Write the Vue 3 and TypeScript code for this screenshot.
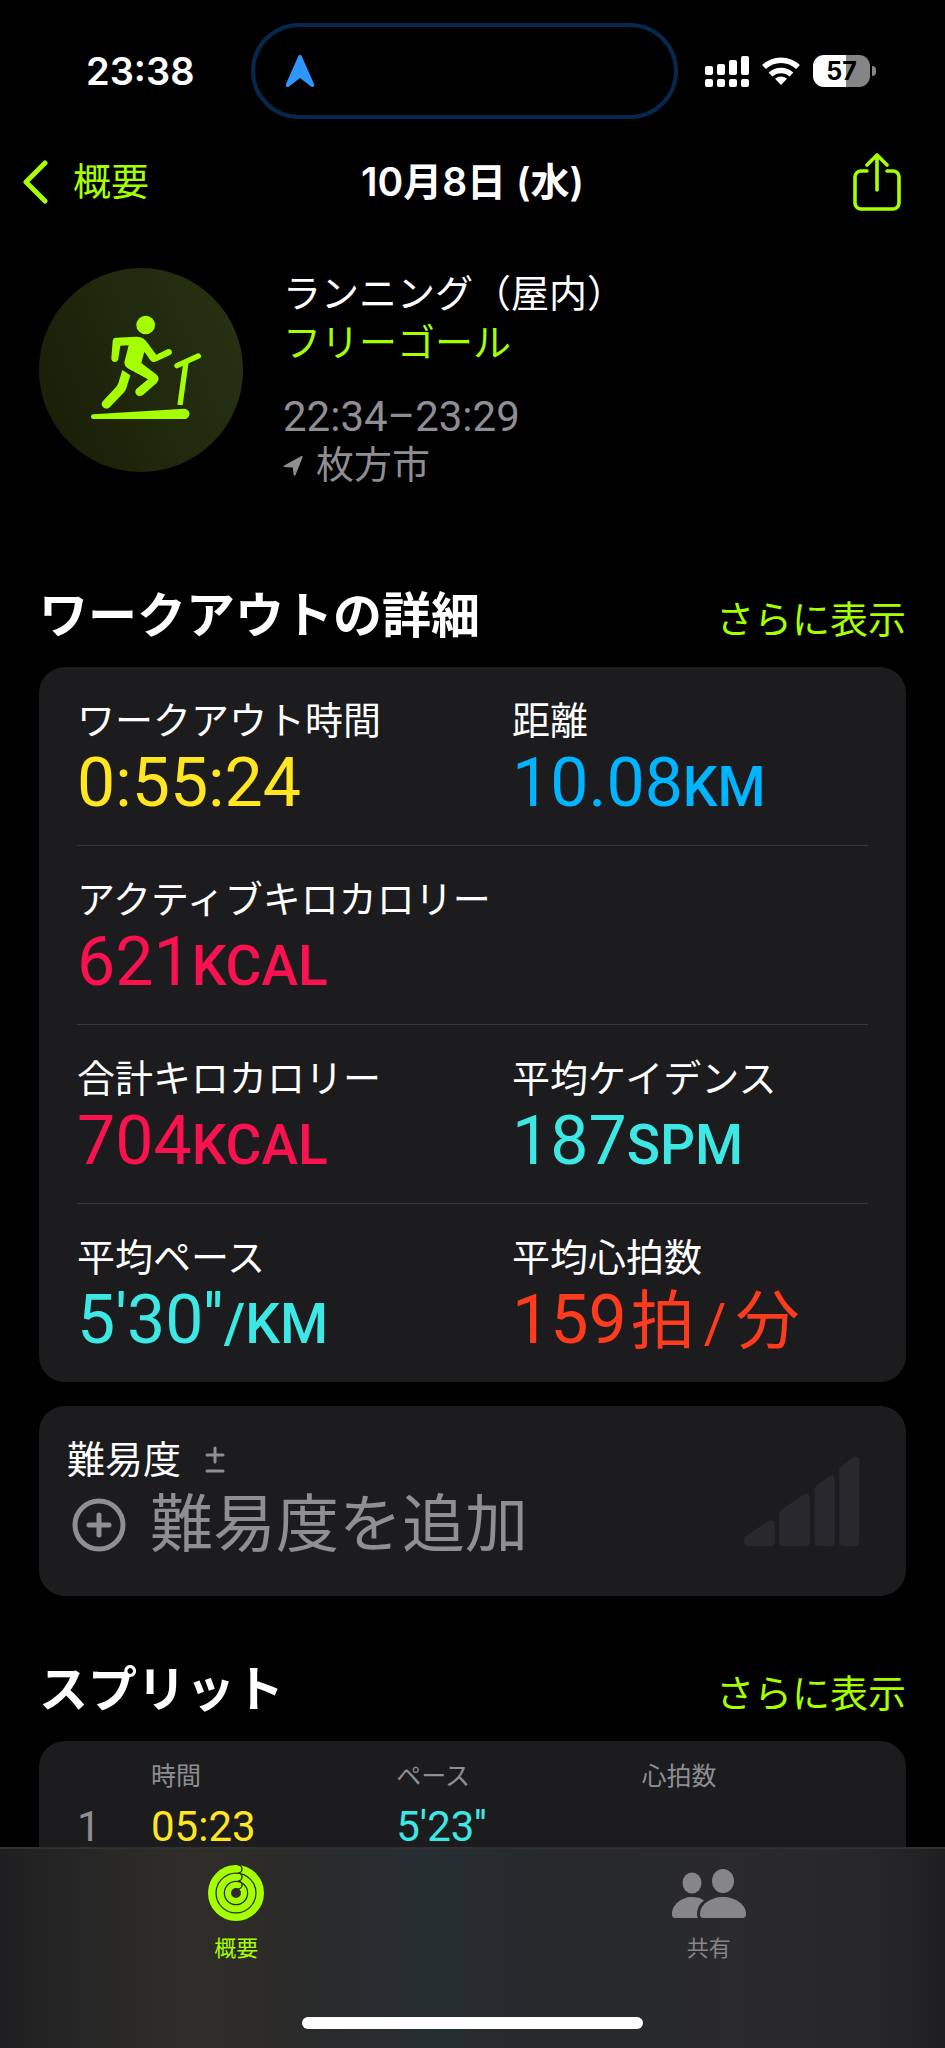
<script setup lang="ts">
interface Metric {
  label: string
  value: string
  unit?: string
  rate?: [string, string]
  tone: string
}

interface Split {
  index: number
  time: string
  pace: string
  heartRate: string
}

const metricRows: Metric[][] = [
  [
    { label: 'ワークアウト時間', value: '0:55:24', tone: 'yellow' },
    { label: '距離', value: '10.08', unit: 'KM', tone: 'blue' },
  ],
  [{ label: 'アクティブキロカロリー', value: '621', unit: 'KCAL', tone: 'pink' }],
  [
    { label: '合計キロカロリー', value: '704', unit: 'KCAL', tone: 'pink' },
    { label: '平均ケイデンス', value: '187', unit: 'SPM', tone: 'cyan' },
  ],
  [
    { label: '平均ペース', value: "5'30''", unit: '/KM', tone: 'cyan' },
    { label: '平均心拍数', value: '159', rate: ['拍', '分'], tone: 'red' },
  ],
]

const splits: Split[] = [{ index: 1, time: '05:23', pace: "5'23''", heartRate: '' }]
</script>

<template>
  <div class="screen">
    <div class="status">
      <time class="clock">23:38</time>
      <div class="island">
        <svg class="island-arrow" viewBox="0 0 30 34" aria-hidden="true">
          <path d="M15 1c1 0 1.600.6 2 1.800L29 30c.8 2.600-1 3.800-3 2.400L15 24 4 32.400C2 33.800.2 32.600 1 30L13 2.800C13.400 1.600 14 1 15 1z" fill="#2f96ff" />
        </svg>
      </div>
      <div class="indicators">
        <svg class="signal" viewBox="0 0 44 32" fill="#fff" aria-hidden="true">
          <rect x="0" y="11" width="8" height="9" rx="2" />
          <rect x="12" y="9" width="8" height="11" rx="2" />
          <rect x="24" y="5" width="8" height="15" rx="2" />
          <rect x="36" y="1" width="8" height="19" rx="2" />
          <rect x="0" y="24" width="8" height="8" rx="2" />
          <rect x="12" y="24" width="8" height="8" rx="2" />
          <rect x="24" y="24" width="8" height="8" rx="2" />
          <rect x="36" y="24" width="8" height="8" rx="2" />
        </svg>
        <svg class="wifi" viewBox="0 0 38 28" aria-hidden="true">
          <g fill="none" stroke="#fff" stroke-width="5.500">
            <path d="M2 10a24.500 24.500 0 0 1 34 0" />
            <path d="M8.500 17.500a15.500 15.500 0 0 1 21 0" />
          </g>
          <path d="M19 28l-6-6.200a9 9 0 0 1 12 0z" fill="#fff" />
        </svg>
        <span class="battery">57</span>
      </div>
    </div>

    <header class="nav">
      <button class="back" type="button">
        <svg viewBox="0 0 26 44" aria-hidden="true">
          <path d="M23 3L4 22l19 19" fill="none" stroke="currentColor" stroke-width="5" stroke-linecap="round" stroke-linejoin="round" />
        </svg>
        <span>概要</span>
      </button>
      <h1>10月8日 (水)</h1>
      <button class="share" type="button" aria-label="共有">
        <svg viewBox="0 0 48 58" fill="none" stroke="currentColor" stroke-width="3.600" stroke-linecap="round" stroke-linejoin="round" aria-hidden="true">
          <path d="M14 18H8a6 6 0 0 0-6 6v26a6 6 0 0 0 6 6h32a6 6 0 0 0 6-6V24a6 6 0 0 0-6-6h-6" />
          <path d="M24 37V3M14 12L24 2l10 10" />
        </svg>
      </button>
    </header>

    <main>
      <section class="hero">
        <svg class="badge" viewBox="-123 -96 612 612" aria-hidden="true">
          <defs>
            <linearGradient id="badge-fill" x1="0" y1="0.7" x2="1" y2="0.3">
              <stop offset="0" stop-color="#1a1f07" />
              <stop offset="1" stop-color="#263113" />
            </linearGradient>
          </defs>
          <circle cx="183" cy="210" r="306" fill="url(#badge-fill)" />
          <g fill="#a6ff00">
            <circle cx="197" cy="75" r="28" />
            <path d="M108 113L168 110C185 109 195 118 202 128L229 164L262 148C273 144 281 157 272 164L230 184C221 188 215 186 210 179L193 155L184 189L228 223C238 231 238 240 230 249L189 285C176 295 159 280 169 267L204 238L147 207C134 199 131 190 135 179L146 136L121 137L115 177C112 190 93 188 94 174L98 124C99 116 102 113 108 113Z" />
            <path d="M127 210L151 226L139 265C137 271 134 275 130 279L90 321C78 333 59 319 67 305L109 260L115 250Z" />
            <path d="M40 343L313 326a15.500 15.500 0 0 1 0 31H40a7 7 0 0 1 0-14z" />
          </g>
          <g fill="none" stroke="#a6ff00" stroke-width="16">
            <path d="M291 197L355 168" stroke-linecap="round" />
            <path d="M318 186L300 315" />
          </g>
        </svg>
        <div class="hero-text">
          <p>ランニング（屋内）</p>
          <p class="goal">フリーゴール</p>
          <p class="muted hours">22:34–23:29</p>
          <p class="muted place">
            <svg viewBox="0 0 20 22" aria-hidden="true">
              <path d="M1.200 10.500L18 1.200c1-.5 1.800 0 1.500 1.200L12.500 20c-.5 1.200-1.700 1-1.900-.2L9.800 12.500l-8.400-.4c-1.200-.1-1.300-1.100-.2-1.600z" fill="currentColor" />
            </svg>
            <span>枚方市</span>
          </p>
        </div>
      </section>

      <div class="section-head">
        <h2>ワークアウトの詳細</h2>
        <a href="#details">さらに表示</a>
      </div>
      <section id="details" class="card metrics">
        <div v-for="(row, i) in metricRows" :key="i" class="metric-row">
          <div v-for="metric in row" :key="metric.label" class="metric">
            <div class="label">{{ metric.label }}</div>
            <div class="value" :class="metric.tone">
              {{ metric.value }}<span v-if="metric.unit" class="unit">{{ metric.unit }}</span><span v-if="metric.rate" class="rate">{{ metric.rate[0] }}<span class="per">/</span>{{ metric.rate[1] }}</span>
            </div>
          </div>
        </div>
      </section>

      <button class="card effort" type="button">
        <span class="effort-text">
          <span class="effort-label">
            難易度
            <svg viewBox="0 0 20 28" fill="none" stroke="currentColor" stroke-width="3" stroke-linecap="round" aria-hidden="true">
              <path d="M2 9h16M10 2v14M2 25h16" />
            </svg>
          </span>
          <span class="effort-action">
            <svg viewBox="0 0 54 54" fill="none" stroke="currentColor" stroke-width="5" stroke-linecap="round" aria-hidden="true">
              <circle cx="27" cy="27" r="24" />
              <path d="M17 27h20M27 17v20" />
            </svg>
            難易度を追加
          </span>
        </span>
        <svg class="effort-bars" viewBox="66 48 350 270" fill="#29282d" aria-hidden="true">
          <path d="M73 289L140 244Q159 234 161 256V304Q161 318 148 318H82Q68 318 68 303Q68 293 73 289Z" />
          <path d="M181 209L245 165Q264 155 267 175V304Q267 318 254 318H187Q174 318 174 304V222Q174 213 181 209Z" />
          <path d="M286 137L320 111Q338 101 341 118V304Q341 318 329 318H292Q280 318 280 304V148Q280 141 286 137Z" />
          <path d="M359 80L394 54Q413 44 415 62V304Q415 318 403 318H366Q354 318 354 304V91Q354 84 359 80Z" />
        </svg>
      </button>

      <div class="section-head splits-head">
        <h2>スプリット</h2>
        <a href="#splits">さらに表示</a>
      </div>
      <section id="splits" class="card splits">
        <table>
          <thead>
            <tr>
              <th class="col-index" scope="col"></th>
              <th class="col-data" scope="col">時間</th>
              <th class="col-data" scope="col">ペース</th>
              <th scope="col">心拍数</th>
            </tr>
          </thead>
          <tbody>
            <tr v-for="split in splits" :key="split.index">
              <td class="index">{{ split.index }}</td>
              <td class="yellow">{{ split.time }}</td>
              <td class="cyan">{{ split.pace }}</td>
              <td>{{ split.heartRate }}</td>
            </tr>
          </tbody>
        </table>
      </section>
    </main>

    <footer class="tabbar">
      <nav class="tabs">
        <a class="tab active" href="#summary">
          <svg class="rings" viewBox="0 0 56 56" fill="none" aria-hidden="true">
            <g stroke="#a6ff00">
              <circle cx="28" cy="28" r="24.300" stroke-width="7.400" />
              <circle cx="28" cy="28" r="15.800" stroke-width="7" />
              <circle cx="28" cy="28" r="8" stroke-width="6" />
            </g>
            <path d="M30 0a4 4 0 0 1 0 8a4 4 0 0 1 0 8a4 4 0 0 1 0 8" stroke="#2e2d27" stroke-width="1.500" />
          </svg>
          <span>概要</span>
        </a>
        <a class="tab" href="#sharing">
          <svg class="people" viewBox="0 0 74 56" fill="currentColor" aria-hidden="true">
            <ellipse cx="20" cy="18" rx="9.500" ry="10.500" />
            <ellipse cx="51" cy="16" rx="11" ry="12" />
            <path d="M4 53C1 53 0 52 0 49C0 40 9 32 20 32C25 32 29 33 32 35.500C27 39 25 44 25 50Q25 52 26 53Z" />
            <path d="M32 53C29 53 28 52 28 49C28 40 38 32 51 32S74 40 74 49C74 52 73 53 70 53Z" />
          </svg>
          <span>共有</span>
        </a>
      </nav>
      <div class="home-indicator"></div>
    </footer>
  </div>
</template>

<style>
body {
  background: #000;
}
</style>

<style scoped>
.screen {
  display: flex;
  flex-direction: column;
  min-height: 100vh;
  background: #000;
  color: #fff;
  font-family: Roboto, "Noto Sans CJK JP", sans-serif;
  font-size: 38px;
  line-height: 48px;
}

h1,
h2,
p {
  margin: 0;
}

svg {
  display: block;
  flex: none;
}

button {
  padding: 0;
  border: 0;
  background: none;
  color: inherit;
  font: inherit;
  text-align: left;
}

a {
  color: #a6ff00;
  text-decoration: none;
}

/* Status bar */
.status {
  display: grid;
  grid-template-columns: 251fr 427fr 267fr;
  align-items: center;
  height: 98px;
  padding: 22px 0 2px;
}

.clock {
  padding-left: 86px;
  font-family: Inter, sans-serif;
  font-size: 38px;
  font-weight: 600;
}

.island {
  display: flex;
  align-items: center;
  box-sizing: border-box;
  height: 96px;
  padding-left: 30px;
  border: 4px solid #06284e;
  border-radius: 48px;
}

.island-arrow {
  width: 30px;
  height: 34px;
}

.indicators {
  display: flex;
  align-items: center;
  gap: 13px;
  padding-left: 27px;
}

.signal {
  width: 44px;
  height: 32px;
}

.wifi {
  width: 38px;
  height: 28px;
}

.battery {
  position: relative;
  width: 57px;
  height: 32px;
  border-radius: 11px;
  background: linear-gradient(90deg, #fff 58%, #858585 58%);
  color: #000;
  font-family: Inter, sans-serif;
  font-size: 25px;
  font-weight: 700;
  line-height: 32px;
  text-align: center;
}

.battery::after {
  position: absolute;
  top: 11px;
  right: -6px;
  width: 4px;
  height: 10px;
  border-radius: 0 5px 5px 0;
  background: #858585;
  content: "";
}

/* Navigation */
.nav {
  display: grid;
  grid-template-columns: 1fr auto 1fr;
  align-items: center;
  height: 120px;
  padding: 0 22px;
}

.back {
  display: flex;
  align-items: center;
  gap: 25px;
  color: #a6ff00;
}

.back svg {
  width: 26px;
  height: 44px;
}

.nav h1 {
  font-family: Inter, "Noto Sans CJK JP", sans-serif;
  font-size: 39px;
  font-weight: 600;
}

.share {
  justify-self: end;
  margin-right: 22px;
  color: #a6ff00;
}

.share svg {
  width: 48px;
  height: 58px;
}

main {
  display: flex;
  flex: 1;
  flex-direction: column;
  padding: 26px 39px 0;
}

/* Workout summary */
.hero {
  display: flex;
  gap: 40px;
}

.badge {
  width: 204px;
  height: 204px;
}

.hero-text {
  padding-top: 2px;
  line-height: 49px;
}

.goal {
  color: #a6ff00;
}

.muted {
  color: #8e8e93;
}

.hours {
  margin-top: 24px;
  font-size: 42px;
}

.place {
  display: flex;
  align-items: center;
  gap: 13px;
}

.place svg {
  width: 20px;
  height: 22px;
}

/* Sections */
.section-head {
  display: flex;
  align-items: baseline;
  justify-content: space-between;
  margin: 97px 0 20px;
}

.splits-head {
  margin-top: 65px;
}

h2 {
  font-size: 49px;
  font-weight: 700;
  line-height: 60px;
}

.card {
  border-radius: 26px;
  background: #1c1c1e;
}

.metrics {
  padding: 0 38px;
}

.metric-row {
  display: grid;
  grid-template-columns: 11fr 9fr;
  padding: 32px 0 22px;
}

.metric-row + .metric-row {
  border-top: 1px solid #38383a;
}

.label {
  line-height: 44px;
}

.value {
  font-size: 68px;
  line-height: 80px;
  white-space: nowrap;
}

.unit {
  font-size: 55px;
  font-weight: 500;
  line-height: 54px;
}

.rate {
  margin-left: 4px;
  font-size: 64px;
  line-height: 64px;
}

.per {
  margin: 0 9px;
  font-size: 55px;
}

.yellow {
  color: #ffe620;
}

.blue {
  color: #00b4ff;
}

.pink {
  color: #fa114f;
}

.cyan {
  color: #3de8e4;
}

.red {
  color: #ff3b1d;
}

/* Effort */
.effort {
  display: flex;
  align-items: center;
  justify-content: space-between;
  margin-top: 24px;
  padding: 30px 46px 30px 28px;
}

.effort-label {
  display: flex;
  align-items: center;
  gap: 24px;
}

.effort-label svg {
  width: 20px;
  height: 28px;
  color: #8e8e93;
}

.effort-action {
  display: flex;
  align-items: center;
  gap: 24px;
  padding-left: 5px;
  color: #8e8e93;
  font-size: 63px;
  line-height: 82px;
}

.effort-action svg {
  width: 54px;
  height: 54px;
}

.effort-bars {
  width: 117px;
  height: 90px;
}

/* Splits */
.splits {
  flex: 1;
  padding: 18px 38px 0;
  border-radius: 26px 26px 0 0;
}

table {
  width: 100%;
  border-collapse: collapse;
  table-layout: fixed;
}

th,
td {
  padding: 0;
  text-align: left;
}

th {
  color: #8e8e93;
  font-size: 25px;
  font-weight: 400;
  line-height: 36px;
}

.col-index {
  width: 74px;
}

.col-data {
  width: 31%;
}

td {
  padding-top: 12px;
  font-size: 42px;
  line-height: 40px;
}

.index {
  color: #8e8e93;
}

/* Tab bar */
.tabbar {
  position: sticky;
  bottom: 0;
  box-sizing: border-box;
  padding: 16px 0 19px;
  border-top: 2px solid #313134;
  background: linear-gradient(90deg, #1f1f21 0%, #272727 9%, #2f2d27 20%, #2c2b29 28%, #292b2c 34%, #262e31 45%, #27292b 58%, #2a2a2c 78%, #28282a 92%, #1f1f21 100%);
}

.tabs {
  display: grid;
  grid-template-columns: 1fr 1fr;
}

.tab {
  display: flex;
  flex-direction: column;
  align-items: center;
  gap: 12px;
  color: #868688;
  font-size: 22px;
  line-height: 32px;
}

.tab.active {
  color: #a6ff00;
}

.rings {
  width: 56px;
  height: 56px;
}

.people {
  width: 74px;
  height: 56px;
}

.home-indicator {
  width: 36%;
  height: 12px;
  margin: 52px auto 0;
  border-radius: 6px;
  background: #fff;
}
</style>
